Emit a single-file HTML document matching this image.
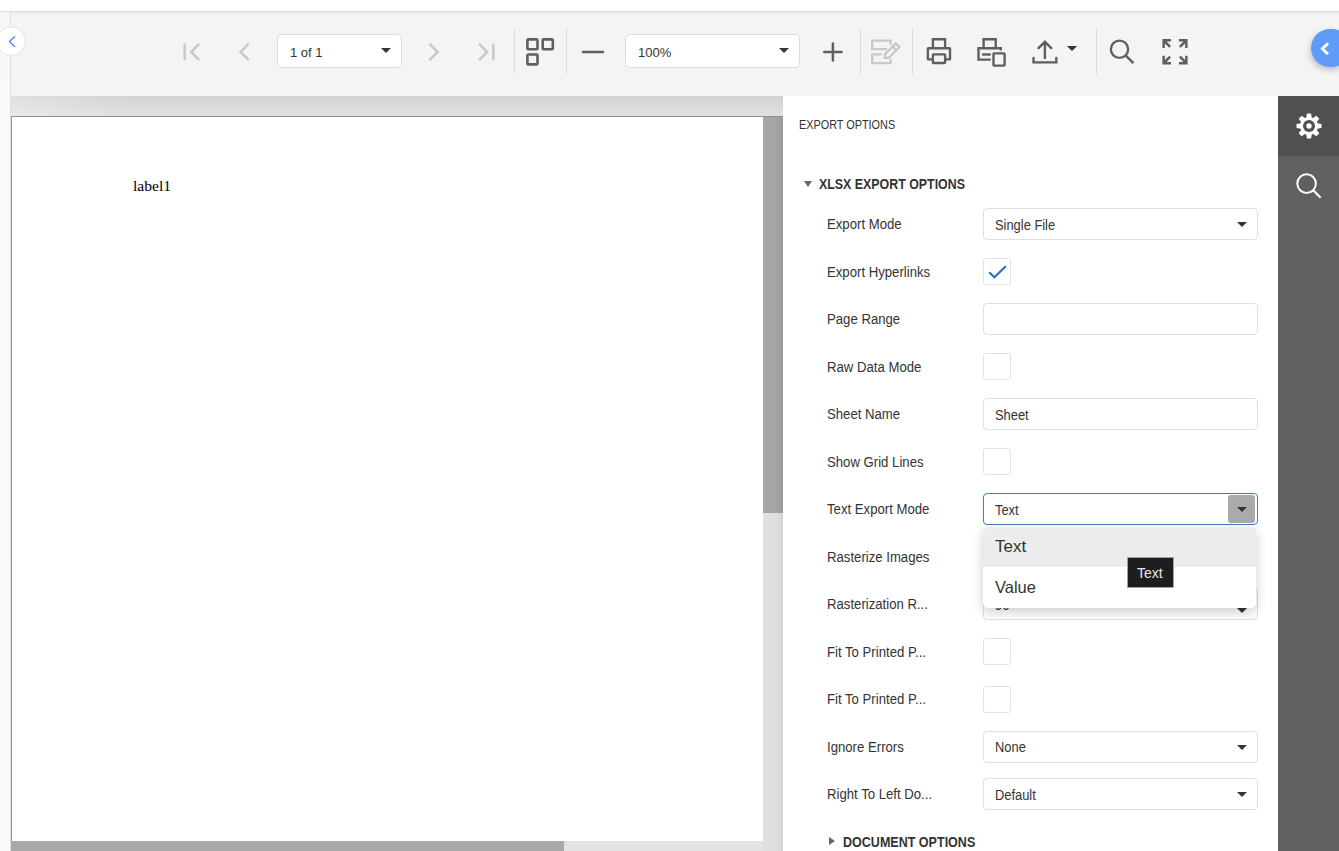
<!DOCTYPE html>
<html><head><meta charset="utf-8">
<style>
*{box-sizing:border-box;margin:0;padding:0}
html,body{width:1339px;height:851px;overflow:hidden;background:#fff;font-family:"Liberation Sans",sans-serif;color:#333}
.abs{position:absolute}
#topstrip{left:0;top:0;width:1339px;height:11px;background:#fff}
#toolbar{left:0;top:11px;width:1339px;height:85px;background:#f4f4f4;border-top:1px solid #dce0e4}
#toolbar:before{content:"";position:absolute;left:0;right:0;top:0;height:3px;background:linear-gradient(#e6e8ea,#f4f4f4)}
#leftstrip{left:0;top:12px;width:10px;height:839px;background:linear-gradient(#f6f6f6,#f9f9f9 90px,#fafafa)}
#leftline{left:10px;top:11px;width:1px;height:840px;background:#dde0e5}
#viewer{left:11px;top:96px;width:772px;height:755px;background:linear-gradient(90deg,rgba(255,255,255,0.3),rgba(255,255,255,0) 120px),linear-gradient(#d3d3d3,#e0e0e0 20px,#e0e0e0)}
#page{left:11px;top:116px;width:752px;height:725px;background:#fff;border-top:1px solid #8f8f8f;border-left:1px solid #959595}
#pagetopline{left:11px;top:116px;width:772px;height:1px;background:#8f8f8f}
#vtrack{left:763px;top:116px;width:20px;height:735px;background:linear-gradient(90deg,#e0e0e0,#dfdfdf 60%,#d4d4d4)}
#vthumb{left:763px;top:116px;width:20px;height:397px;background:linear-gradient(90deg,#a7a7a7,#a5a5a5 60%,#9b9b9b)}
#htrack{left:11px;top:841px;width:752px;height:10px;background:#e3e3e3}
#hthumb{left:11px;top:841px;width:553px;height:10px;background:#a8a8a8}
#panel{left:783px;top:96px;width:495px;height:755px;background:#fff}
#sidebar{left:1278px;top:96px;width:61px;height:755px;background:#606060}
#gearbox{left:1278px;top:96px;width:61px;height:60px;background:#505050}
.sep{position:absolute;top:29px;width:1px;height:45px;background:#dcdcdc}
.tb-dd{position:absolute;top:34px;height:34px;background:#fff;border:1px solid #dcdcdc;border-radius:5px;font-size:13px;color:#333}
.tb-dd span{position:absolute;left:12px;top:9.5px}
.tri{position:absolute;width:0;height:0;border-left:5px solid transparent;border-right:5px solid transparent;border-top:5px solid #333}
svg{position:absolute;overflow:visible}
.lbl{position:absolute;left:827px;font-size:14px;color:#333;line-height:16px;white-space:nowrap;transform:scaleX(0.94);transform-origin:0 0}
.dd{position:absolute;left:983px;width:275px;height:32px;border:1px solid #dfdfdf;border-radius:4px;background:#fff;font-size:13px;color:#333}
.dd span{position:absolute;left:10.8px;top:7.8px;line-height:16px;font-size:14px;transform:scaleX(0.92);transform-origin:0 0;white-space:nowrap}
.dd .tri{left:253px;top:13px}
.cb{position:absolute;left:983px;width:28px;height:27px;border:1px solid #e2e2e2;border-radius:2.5px;background:#fff}

</style></head><body>
<div id="topstrip" class="abs"></div>
<div id="toolbar" class="abs"></div>
<div id="leftstrip" class="abs"></div>
<div id="leftline" class="abs"></div>
<div id="viewer" class="abs"></div>
<div id="page" class="abs"></div>
<div id="vtrack" class="abs"></div>
<div id="vthumb" class="abs"></div>
<div id="pagetopline" class="abs"></div>
<div id="htrack" class="abs"></div>
<div id="hthumb" class="abs"></div>
<div id="panel" class="abs"></div>
<div id="sidebar" class="abs"></div>
<div id="gearbox" class="abs"></div>

<svg width="1339" height="96" style="left:0;top:0" viewBox="0 0 1339 96">
 <!-- left collapse circle -->
 <circle cx="11" cy="41.2" r="14.3" fill="#fff" stroke="#e2e4e7" stroke-width="1"/>
 <path d="M14.6,36.8 L9.4,41.6 L14.6,46.4" fill="none" stroke="#4a8af4" stroke-width="1.4" stroke-linecap="round" stroke-linejoin="round"/>
 <g fill="none" stroke="#c8c8c8" stroke-width="2.5" stroke-linecap="round" stroke-linejoin="miter">
  <path d="M184.7,44.5 V59.3"/>
  <path d="M198.6,44.4 L191.2,51.9 L198.6,59.4"/>
  <path d="M248,44.4 L240.6,51.9 L248,59.4"/>
  <path d="M430.2,44.4 L437.6,51.9 L430.2,59.4"/>
  <path d="M479.7,44.4 L487.1,51.9 L479.7,59.4"/>
  <path d="M493.3,44.5 V59.3"/>
 </g>
 <g fill="none" stroke="#5f5f5f" stroke-width="2.6">
  <rect x="527.4" y="39.4" width="10.1" height="9.9" rx="1"/>
  <rect x="542.7" y="39.4" width="10.1" height="9.9" rx="1"/>
  <rect x="527.4" y="54.5" width="10.1" height="9.9" rx="1"/>
  <path d="M583,52.05 H603" stroke-width="2.5" stroke-linecap="round"/>
  <path d="M832.9,43.4 V60.6 M824.3,52 H841.5" stroke-width="2.5" stroke-linecap="round"/>
 </g>
 <!-- edit icon disabled -->
 <g fill="none" stroke="#c8c8c8" stroke-width="2.3">
  <path d="M887,49.15 H872.25 V40.65 H890.65 V44.8"/>
  <path d="M882,54.35 H872.25 V63.05 H890.65 V58.9"/>
  <path d="M885,57.8 L885,54.3 L895.8,43.4 L899.5,47 L888.6,57.8 Z" stroke-linejoin="miter"/>
  <path d="M892.6,46.6 L896.3,50.3"/>
 </g>
 <g fill="none" stroke="#5f5f5f" stroke-width="2.4">
  <path d="M932.9,47.1 V39.2 H945.1 V47.1"/>
  <rect x="927.85" y="48.3" width="22.15" height="11.1" rx="0.5"/>
  <rect x="932.9" y="54.4" width="12.2" height="8.6" fill="#f4f4f4" rx="0.5"/>
  <path d="M983.6,47.1 V39.2 H995.7 V47.1"/>
  <path d="M990.8,59.6 H978.5 V48.3 H1000.8 V50.5"/>
  <path d="M982.1,54.5 H990.8"/>
  <rect x="993.5" y="53.4" width="11.1" height="12.2" rx="0.5"/>
  <path d="M1038.5,48.2 L1044.9,41.8 L1051.3,48.2 M1044.9,42 V58" stroke-linecap="round"/>
  <path d="M1033.5,58 V62.4 H1056.3 V58" stroke-linecap="round"/>
  <circle cx="1119.5" cy="49.3" r="8.65" stroke-width="2.3"/>
  <path d="M1125.8,55.6 L1133.4,63.2" stroke-width="2.4"/>
 </g>
 <path d="M1066.9,46.1 H1077.1 L1072,51 Z" fill="#333"/>
 <g fill="#5f5f5f">
  <path d="M1162.4,39.1 H1171 V41.6 H1166.6 L1171,46 L1169.2,47.8 L1164.9,43.5 V48 H1162.4 Z"/>
  <path d="M1187.6,39.1 H1179 V41.6 H1183.4 L1179,46 L1180.8,47.8 L1185.1,43.5 V48 H1187.6 Z"/>
  <path d="M1162.4,64.5 H1171 V62 H1166.6 L1171,57.6 L1169.2,55.8 L1164.9,60.1 V55.8 H1162.4 Z"/>
  <path d="M1187.6,64.5 H1179 V62 H1183.4 L1179,57.6 L1180.8,55.8 L1185.1,60.1 V55.8 H1187.6 Z"/>
 </g>
 <!-- separators -->
 <g fill="#dcdcdc">
  <rect x="514" y="29" width="1" height="45"/>
  <rect x="566" y="29" width="1" height="45"/>
  <rect x="860" y="29" width="1" height="45"/>
  <rect x="912" y="29" width="1" height="45"/>
  <rect x="1096" y="29" width="1" height="45"/>
 </g>
</svg>
<div class="tb-dd" style="left:277px;width:125px"><span style="left:12px">1 of 1</span><div class="tri" style="left:103px;top:13px"></div></div>
<div class="tb-dd" style="left:625px;width:175px"><span style="left:12px">100%</span><div class="tri" style="left:153px;top:13px"></div></div>
<div class="abs" style="left:1311px;top:29px;width:40px;height:38px;border-radius:19px;background:#5e9bfb;box-shadow:-1px 3px 6px rgba(0,0,0,0.22)"></div>
<svg width="20" height="20" style="left:1315px;top:39px" viewBox="0 0 20 20"><path d="M13,4.4 L7.4,9.8 L13,15.2" fill="none" stroke="#fff" stroke-width="2.9" stroke-linejoin="miter"/></svg>
<div class="abs" style="left:799px;top:118px;font-size:12px;line-height:14px;color:#333;transform:scaleX(0.905);transform-origin:0 0;white-space:nowrap">EXPORT OPTIONS</div>
<div class="tri" style="left:803.5px;top:180.5px;border-left-width:4.3px;border-right-width:4.3px;border-top:6.5px solid #666"></div>
<div class="abs" style="left:819px;top:176px;font-size:14px;line-height:16px;font-weight:bold;color:#333;transform:scaleX(0.885);transform-origin:0 0;white-space:nowrap">XLSX EXPORT OPTIONS</div>
<div class="lbl" style="top:216.0px">Export Mode</div>
<div class="dd" style="top:208.0px"><span>Single File</span><div class="tri"></div></div>
<div class="lbl" style="top:263.5px">Export Hyperlinks</div>
<div class="cb" style="top:258.0px"><svg width="28" height="27" style="left:0;top:0"><path d="M5.3,13.3 L10.3,18.3 L21.8,7.2" fill="none" stroke="#2f6fb7" stroke-width="2.2"/></svg></div>
<div class="lbl" style="top:311.0px">Page Range</div>
<div class="dd" style="top:303.0px"><span></span></div>
<div class="lbl" style="top:358.5px">Raw Data Mode</div>
<div class="cb" style="top:353.0px"></div>
<div class="lbl" style="top:406.0px">Sheet Name</div>
<div class="dd" style="top:398.0px"><span>Sheet</span></div>
<div class="lbl" style="top:453.5px">Show Grid Lines</div>
<div class="cb" style="top:448.0px"></div>
<div class="lbl" style="top:501.0px">Text Export Mode</div>
<div class="dd" style="top:493.0px;border-color:#3d7bc3"><div class="abs" style="left:244px;top:1px;width:27px;height:28px;background:#aaa;border-radius:3px"></div><span>Text</span><div class="tri"></div></div>
<div class="lbl" style="top:548.5px">Rasterize Images</div>
<div class="cb" style="top:543.0px"></div>
<div class="lbl" style="top:596.0px">Rasterization R...</div>
<div class="dd" style="top:588.0px"><span>96</span><div class="tri"></div></div>
<div class="lbl" style="top:643.5px">Fit To Printed P...</div>
<div class="cb" style="top:638.0px"></div>
<div class="lbl" style="top:691.0px">Fit To Printed P...</div>
<div class="cb" style="top:685.5px"></div>
<div class="lbl" style="top:738.5px">Ignore Errors</div>
<div class="dd" style="top:730.5px"><span>None</span><div class="tri"></div></div>
<div class="lbl" style="top:786.0px">Right To Left Do...</div>
<div class="dd" style="top:778.0px"><span>Default</span><div class="tri"></div></div>
<div class="tri" style="left:829px;top:837px;border-top:4.5px solid transparent;border-bottom:4.5px solid transparent;border-left:6.5px solid #666;border-right:0"></div>
<div class="abs" style="left:843px;top:834px;font-size:14px;line-height:16px;font-weight:bold;color:#333;transform:scaleX(0.895);transform-origin:0 0;white-space:nowrap">DOCUMENT OPTIONS</div>
<div class="tri" style="left:1237px;top:608px"></div><div class="abs" style="left:983px;top:526.5px;width:272.5px;height:81.5px;background:#fff;border-radius:5px;box-shadow:0 4px 12px rgba(0,0,0,0.2);overflow:hidden">
<div class="abs" style="left:0;top:0;width:100%;height:40.5px;background:#ececec"></div>
<div class="abs" style="left:12px;top:10px;font-size:17px;line-height:20px;color:#333">Text</div>
<div class="abs" style="left:12px;top:50.5px;font-size:16.5px;line-height:20px;color:#333">Value</div>
</div>
<div class="abs" style="left:1127px;top:557px;width:46.5px;height:31px;background:#1e1e1e;border:1px solid #a0a0a0;color:#e8e8e8;font-size:14px;line-height:16px"><span class="abs" style="left:9px;top:6.5px">Text</span></div>
<svg width="61" height="120" style="left:1278px;top:96px" viewBox="0 0 61 120">
 <g transform="translate(31,30)" fill="#fff">
  <circle r="9"/>
  <g><path d="M-2.8,-8 L-2.1,-12.5 H2.1 L2.8,-8 Z"/><path d="M-2.8,-8 L-2.1,-12.5 H2.1 L2.8,-8 Z" transform="rotate(45)"/><path d="M-2.8,-8 L-2.1,-12.5 H2.1 L2.8,-8 Z" transform="rotate(90)"/><path d="M-2.8,-8 L-2.1,-12.5 H2.1 L2.8,-8 Z" transform="rotate(135)"/><path d="M-2.8,-8 L-2.1,-12.5 H2.1 L2.8,-8 Z" transform="rotate(180)"/><path d="M-2.8,-8 L-2.1,-12.5 H2.1 L2.8,-8 Z" transform="rotate(225)"/><path d="M-2.8,-8 L-2.1,-12.5 H2.1 L2.8,-8 Z" transform="rotate(270)"/><path d="M-2.8,-8 L-2.1,-12.5 H2.1 L2.8,-8 Z" transform="rotate(315)"/></g>
  <circle r="6" fill="#505050"/>
  <circle r="2.7"/>
 </g>
 <circle cx="28.6" cy="87.6" r="9.3" fill="none" stroke="#fff" stroke-width="2"/>
 <path d="M35.3,94.3 L42.6,101.8" stroke="#fff" stroke-width="2.1"/>
</svg>
<div class="abs" style="left:133px;top:176.5px;font-family:'Liberation Serif',serif;font-size:15.6px;line-height:18px;color:#000">label1</div>
</body></html>
